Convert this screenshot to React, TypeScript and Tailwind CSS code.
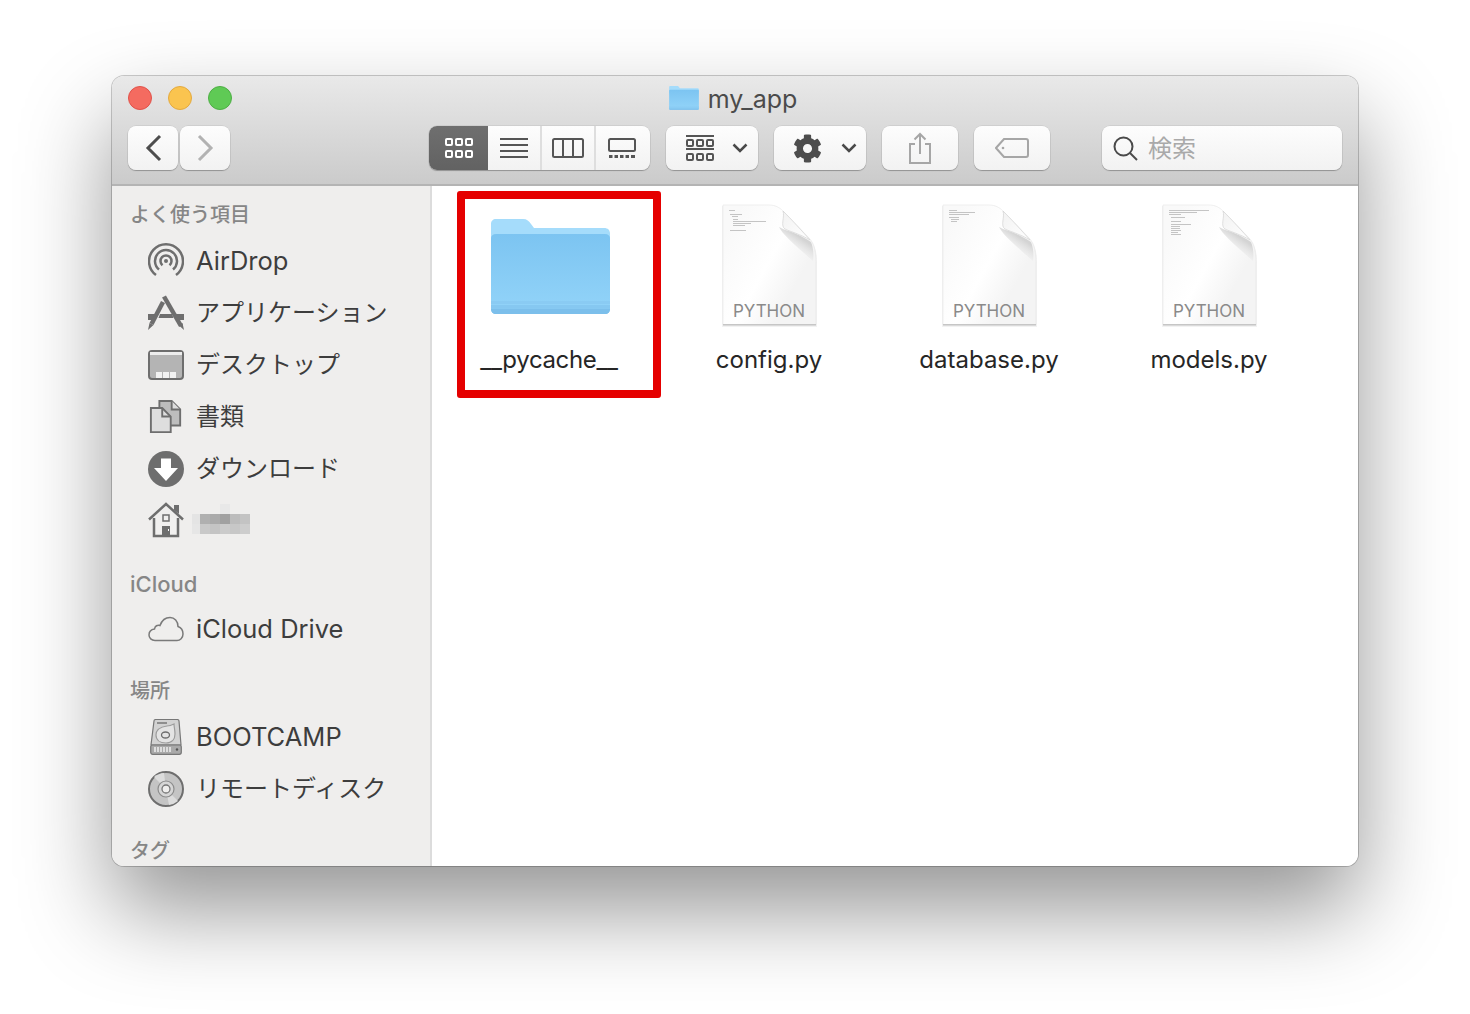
import React from "react";
import { FaCog } from "react-icons/fa";

const btnFace = "bg-gradient-to-b from-[#fdfdfd] to-[#f2f2f2] shadow-[0_0_0_0.5px_rgba(0,0,0,0.1),0_1px_1px_rgba(0,0,0,0.25)]";

const Folder = ({ className }: { className: string }) => (
  <svg viewBox="0 0 119 96" className={className}>
    <defs>
      <linearGradient id="folderFront" x1="0" y1="0" x2="0" y2="1">
        <stop offset="0" stopColor="#7cc4f1" />
        <stop offset="1" stopColor="#93d4f9" />
      </linearGradient>
    </defs>
    <path d="M0 5C0 2 2 0 5 0H32C36 0 38 2 40 5L43 9H113C117 9 119 11 119 15V30H0Z" fill="#a5dcfb" />
    <path d="M0 19C0 17 2 15 5 15H114C117 15 119 17 119 19V90C119 93 117 95 114 95H5C2 95 0 93 0 90Z" fill="url(#folderFront)" />
    <rect x="0" y="82" width="119" height="3" fill="#8acbf3" />
    <rect x="0" y="86" width="119" height="3" fill="#86c8f1" />
    <path d="M0 89.5H119V90C119 93 117 95 114 95H5C2 95 0 93 0 90Z" fill="#7cbfeb" />
  </svg>
);

const Chevron = ({ d, color }: { d: string; color: string }) => (
  <svg viewBox="0 0 50 44" className="w-[50px] h-[44px]">
    <path d={d} fill="none" stroke={color} strokeWidth="3" />
  </svg>
);

const IconGrid = ({ color }: { color: string }) => (
  <svg viewBox="0 0 28 20" className="ml-[1px] w-[28px] h-[20px]" fill="none" stroke={color} strokeWidth="2">
    {[1, 11, 21].map((x) =>
      [1, 13].map((y) => <rect key={`${x}-${y}`} x={x} y={y} width="6" height="6" rx="1" />)
    )}
  </svg>
);

const Segments = () => (
  <div className={`flex h-[44px] w-[221px] rounded-[8px] ${btnFace}`}>
    <div className="flex h-full w-[59px] items-center justify-center rounded-l-[8px] bg-gradient-to-b from-[#6f6f6f] to-[#626262]">
      <IconGrid color="#ffffff" />
    </div>
    <div className="flex h-full w-[54px] items-center justify-center border-r-2 border-[#dedede]">
      <svg viewBox="0 0 28 20" className="w-[28px] h-[20px]" fill="#555555">
        <rect y="0" width="28" height="2" />
        <rect y="6" width="28" height="2" />
        <rect y="12" width="28" height="2" />
        <rect y="18" width="28" height="2" />
      </svg>
    </div>
    <div className="flex h-full w-[54px] items-center justify-center border-r-2 border-[#dedede]">
      <svg viewBox="0 0 32 20" className="w-[32px] h-[20px]" fill="none" stroke="#555555" strokeWidth="2">
        <rect x="1" y="1" width="30" height="18" rx="1.5" />
        <path d="M11 1V19M21 1V19" />
      </svg>
    </div>
    <div className="flex h-full flex-1 items-center justify-center pr-[2px]">
      <svg viewBox="0 0 28 20" className="w-[28px] h-[20px]">
        <rect x="1" y="1" width="26" height="12" rx="1.5" fill="none" stroke="#555555" strokeWidth="2" />
        <path d="M1 17h3.5v3H1zM6.500 17H10v3H6.500zM12 17h3.500v3H12zM17.500 17H21v3h-3.500zM23 17h4v3h-4z" fill="#555555" />
      </svg>
    </div>
  </div>
);

const Btn = ({ w, children }: { w: string; children: React.ReactNode }) => (
  <div className={`flex h-[44px] items-center justify-center rounded-[8px] ${btnFace} ${w}`}>
    {children}
  </div>
);

const Caret = () => (
  <svg viewBox="0 0 16 10" className="w-[16px] h-[10px]">
    <path d="M1.500 1.500L8 8L14.500 1.500" fill="none" stroke="#4a4a4a" strokeWidth="2.500" />
  </svg>
);

const Toolbar = () => (
  <div className="mt-[16px] flex pl-[16px]">
    <div className="flex gap-[2px]">
      <Btn w="w-[50px]">
        <Chevron d="M32 10L20 22L32 34" color="#4d4d4d" />
      </Btn>
      <Btn w="w-[50px]">
        <Chevron d="M19 10L31 22L19 34" color="#b2b2b2" />
      </Btn>
    </div>
    <div className="ml-[199px]">
      <Segments />
    </div>
    <div className="ml-[16px]">
      <Btn w="w-[92px] gap-[18px] pl-[10px]">
        <svg viewBox="0 0 28 26" className="w-[28px] h-[26px]" fill="none" stroke="#555555" strokeWidth="2">
          <path d="M0 1H28M0 14H28" />
          <rect x="1" y="5" width="6" height="6" rx="1" />
          <rect x="11" y="5" width="6" height="6" rx="1" />
          <rect x="21" y="5" width="6" height="6" rx="1" />
          <rect x="1" y="19" width="6" height="6" rx="1" />
          <rect x="11" y="19" width="6" height="6" rx="1" />
          <rect x="21" y="19" width="6" height="6" rx="1" />
        </svg>
        <Caret />
      </Btn>
    </div>
    <div className="ml-[16px]">
      <Btn w="w-[92px] gap-[19px] pl-[9px]">
        <FaCog className="h-[29px] w-[29px] text-[#4d4d4d]" />
        <Caret />
      </Btn>
    </div>
    <div className="ml-[16px]">
      <Btn w="w-[76px]">
        <svg viewBox="0 0 24 32" className="w-[24px] h-[32px]" fill="none" stroke="#a6a6a6" strokeWidth="2">
          <path d="M7 12H2V31H22V12H17" />
          <path d="M12 22V2M6.500 7.500L12 2L17.500 7.500" />
        </svg>
      </Btn>
    </div>
    <div className="ml-[16px]">
      <Btn w="w-[76px]">
        <svg viewBox="0 0 34 20" className="w-[34px] h-[20px]" fill="none" stroke="#a6a6a6" strokeWidth="2">
          <path d="M9 1H31C32 1 33 2 33 3V17C33 18 32 19 31 19H9L1 10Z" />
          <circle cx="8" cy="10" r="1.300" fill="#a6a6a6" stroke="none" />
        </svg>
      </Btn>
    </div>
    <div className={`ml-[52px] flex h-[44px] w-[240px] items-center rounded-[8px] pl-[11px] ${btnFace}`}>
      <svg viewBox="0 0 25 25" className="w-[25px] h-[25px]" fill="none" stroke="#4a4a4a" strokeWidth="2">
        <circle cx="10.500" cy="10.500" r="9" />
        <path d="M17 17L24 24" />
      </svg>
      <span className="ml-[10px] mt-[2px] text-[24px] leading-[30px] text-[#a9a9a9]">検索</span>
    </div>
  </div>
);

const AirDropIcon = () => (
  <svg viewBox="0 0 36 36" className="h-[36px] w-[36px]" fill="none" stroke="#6e6e6e" strokeWidth="2.500">
    <path d="M8 32A17 17 0 1 1 28 32" />
    <path d="M11 26.500A11 11 0 1 1 25 26.500" />
    <path d="M14.500 22.200A5.500 5.500 0 1 1 21.500 22.200" />
    <circle cx="18" cy="18" r="2" fill="#6e6e6e" stroke="none" />
  </svg>
);

const AppsIcon = () => (
  <svg viewBox="0 0 36 36" className="h-[36px] w-[36px]">
    <path d="M0 19H10L7 25H0ZM26 19H36V25H29ZM12 19H24L25.500 23H10.500Z" fill="#6e6e6e" />
    <path d="M16 1.500L33 31" fill="none" stroke="#6e6e6e" strokeWidth="4.500" />
    <path d="M15 7L3.500 29" fill="none" stroke="#6e6e6e" strokeWidth="4.500" />
    <path d="M0 35L1.500 28L5.500 30ZM36 35L34.500 28L30.500 30Z" fill="#6e6e6e" />
  </svg>
);

const DesktopIcon = () => (
  <svg viewBox="0 0 36 30" className="h-[30px] w-[36px]">
    <rect x="1" y="1" width="34" height="28" rx="3" fill="#b4b4b4" stroke="#6e6e6e" strokeWidth="2" />
    <rect x="2" y="2" width="32" height="3" fill="#ededed" />
    <path d="M8 22h6v6H8zM15 22h6v6h-6zM22 22h6v6h-6z" fill="#f2f2f2" />
  </svg>
);

const DocsIcon = () => (
  <svg viewBox="0 0 36 36" className="h-[36px] w-[34px]" strokeWidth="2" stroke="#6e6e6e">
    <path d="M11 1H24L33 10V27H11Z" fill="#bdbdbd" />
    <path d="M24 1V10H33" fill="#dddddd" />
    <path d="M2 8.500H14L23 17.500V34H2Z" fill="#dedede" />
    <path d="M14 8.500V17.500H23" fill="none" />
  </svg>
);

const DownloadIcon = () => (
  <svg viewBox="0 0 36 36" className="h-[36px] w-[36px]">
    <circle cx="18" cy="18" r="18" fill="#6e6e6e" />
    <path d="M13 7.500H23V17H30L18 30L6 17H13Z" fill="#ffffff" />
  </svg>
);

const HomeIcon = () => (
  <svg viewBox="0 0 36 36" className="-mt-[3px] h-[36px] w-[36px]">
    <path d="M6 16V34H30V16" fill="#f1f0ef" stroke="#6e6e6e" strokeWidth="2.500" />
    <path d="M1 17.500L18 2L35 17.500" fill="none" stroke="#6e6e6e" strokeWidth="2.500" />
    <path d="M26 3H31V12L26 8Z" fill="#6e6e6e" />
    <rect x="15" y="13" width="6" height="6" fill="none" stroke="#6e6e6e" strokeWidth="1.500" />
    <rect x="14" y="24" width="8" height="10" fill="#6e6e6e" />
    <rect x="20" y="27" width="1" height="2" fill="#ffffff" />
  </svg>
);

const CloudIcon = () => (
  <svg viewBox="0 0 36 26" className="h-[26px] w-[36px]">
    <path d="M7 24.500C3.500 24.500 1 22 1 19C1 16 3 13.500 6.500 13C7 10 9.500 8.500 12 9.500C14 4 18 1.500 22 1.500C26.500 1.500 30 5 30 10.500C33 11.500 35 14.500 35 18C35 22 32 24.500 29 24.500Z" fill="#efeeed" stroke="#7a7a7a" strokeWidth="1.500" />
  </svg>
);

const DiskIcon = () => (
  <svg viewBox="0 0 32 36" className="h-[36px] w-[32px]">
    <path d="M4 2C4 1 5 0.500 6 0.500H27C28 0.500 29 1 29 2L31 26H1Z" fill="#d2d2d2" stroke="#777777" strokeWidth="1.200" />
    <rect x="0.700" y="26" width="30.600" height="9.300" rx="2" fill="#a9a9a9" stroke="#777777" strokeWidth="1.200" />
    <path d="M7 4H17" stroke="#777777" strokeWidth="1.500" />
    <path d="M17 7C10 8 6 11 6 16C6 21 10 24 16 24C22 24 25 20 25 15C25 11 24 8 24 5C22 6 19 7 17 7Z" fill="#e4e4e4" stroke="#9c9c9c" strokeWidth="1.200" />
    <ellipse cx="15.500" cy="16" rx="4" ry="3" fill="#e4e4e4" stroke="#6e6e6e" strokeWidth="1.300" />
    <path d="M5 28V33M8 28V33M11 28V33M14 28V33M17 28V33M20 28V33" stroke="#eeeeee" strokeWidth="1.500" />
    <circle cx="27" cy="30.500" r="1.200" fill="#555555" />
  </svg>
);

const CdIcon = () => (
  <svg viewBox="0 0 36 36" className="h-[36px] w-[36px]">
    <circle cx="18" cy="18" r="17" fill="#c4c4c4" stroke="#6e6e6e" strokeWidth="2" />
    <path d="M18 18L6 6A17 17 0 0 1 16 2Z" fill="#dcdcdc" />
    <path d="M18 18L30 30A17 17 0 0 1 21 34Z" fill="#dcdcdc" />
    <circle cx="18" cy="18" r="8" fill="#d6d6d6" stroke="#8c8c8c" strokeWidth="1.200" />
    <circle cx="18" cy="18" r="4" fill="#efeeed" stroke="#777777" strokeWidth="1.300" />
  </svg>
);

const MosaicName = () => {
  const cells: [number, number, number, string][] = [
    [220, 504, 10, "#e8e8e8"],
    [192, 514, 8, "#e4e4e4"],
    [200, 514, 10, "#b0b0b0"],
    [210, 514, 10, "#aaaaaa"],
    [220, 514, 10, "#a1a1a1"],
    [230, 514, 10, "#bcbcbc"],
    [240, 514, 10, "#c3c3c3"],
    [192, 524, 8, "#e6e6e6"],
    [200, 524, 10, "#c9c9c9"],
    [210, 524, 10, "#c4c4c4"],
    [220, 524, 10, "#cbcbcb"],
    [230, 524, 10, "#c7c7c7"],
    [240, 524, 10, "#cdcdcd"],
  ];
  return (
    <svg viewBox="192 504 58 30" className="-ml-[4px] -mt-[4px] h-[30px] w-[58px]">
      {cells.map(([x, y, w, c]) => (
        <rect key={`${x}-${y}`} x={x} y={y} width={w} height="10" fill={c} />
      ))}
    </svg>
  );
};

const Heading = ({ children, cls = "pt-[2px] text-[20px]" }: { children: React.ReactNode; cls?: string }) => (
  <div className={`flex h-[40px] items-center pl-[18px] font-medium text-[#868686] ${cls}`}>{children}</div>
);

const Row = ({ icon, children, cls = "text-[24px]" }: { icon: React.ReactNode; children: React.ReactNode; cls?: string }) => (
  <div className="flex h-[52px] items-center pl-[36px]">
    <div className="flex w-[48px] items-center justify-start">
      <div className="flex w-[36px] justify-center">{icon}</div>
    </div>
    <div className={`text-[#3d3d3d] ${cls}`}>{children}</div>
  </div>
);

const Sidebar = () => (
  <div className="h-full w-[320px] shrink-0 overflow-hidden border-r-2 border-[#dcdcdc] bg-[#efeeed] pt-[8px]">
    <Heading>よく使う項目</Heading>
    <div className="mt-[1px]">
      <Row icon={<AirDropIcon />} cls="text-[25.5px]">AirDrop</Row>
      <Row icon={<AppsIcon />}>アプリケーション</Row>
      <Row icon={<DesktopIcon />}>デスクトップ</Row>
      <Row icon={<DocsIcon />}>書類</Row>
      <Row icon={<DownloadIcon />}>ダウンロード</Row>
      <Row icon={<HomeIcon />}><MosaicName /></Row>
    </div>
    <div className="mt-[17px]">
      <Heading cls="text-[22px]">iCloud</Heading>
    </div>
    <div className="-mt-[1px]">
      <Row icon={<CloudIcon />} cls="text-[25.5px]">iCloud Drive</Row>
    </div>
    <div className="mt-[15px]">
      <Heading>場所</Heading>
    </div>
    <div className="mt-[1px]">
      <Row icon={<DiskIcon />} cls="text-[25.5px]">BOOTCAMP</Row>
      <Row icon={<CdIcon />}>リモートディスク</Row>
    </div>
    <div className="mt-[15px]">
      <Heading>タグ</Heading>
    </div>
  </div>
);

const thumbs: Record<string, [number, number, number][]> = {
  config: [
    [6, 5, 6], [7, 9, 12], [9, 11, 6], [10, 14, 5], [10, 16, 33], [10, 18, 18], [10, 20, 12], [7, 25, 16],
  ],
  database: [
    [6, 5, 8], [6, 7, 26], [6, 9, 20], [6, 12, 10], [8, 14, 8], [8, 16, 6],
  ],
  models: [
    [6, 5, 40], [6, 7, 28], [6, 9, 12], [8, 12, 14], [8, 16, 10], [8, 19, 20], [8, 21, 9], [8, 23, 9], [8, 25, 10], [8, 27, 7], [8, 29, 10],
  ],
};

const PyFile = ({ thumb }: { thumb: string }) => (
  <div className="relative h-[120px] w-[93px]">
    <svg viewBox="-3 -1 99 125" className="absolute -left-[3px] -top-[1px] h-[125px] w-[99px]">
      <defs>
        <linearGradient id="pageFill" x1="0.2" y1="0" x2="0.9" y2="0.5">
          <stop offset="0" stopColor="#f9f9f9" />
          <stop offset="0.6" stopColor="#ffffff" />
          <stop offset="1" stopColor="#f4f4f4" />
        </linearGradient>
        <linearGradient id="foldFill" x1="0" y1="0" x2="1" y2="1">
          <stop offset="0" stopColor="#f2f2f2" />
          <stop offset="1" stopColor="#ffffff" />
        </linearGradient>
        <linearGradient id="foldShade" x1="0.6" y1="0.3" x2="0.2" y2="0.9">
          <stop offset="0" stopColor="#d4d4d4" />
          <stop offset="1" stopColor="#ffffff" stopOpacity="0" />
        </linearGradient>
      </defs>
      <path d="M-1 1H48C54 1 57 4 60 7L89 37C92 41 94 47 94 57V122H-1Z" fill="#000000" opacity="0.05" />
      <path d="M0 0H46C53 0 57 3 60 6L87 34C91 39 93 46 93 58V120H0Z" fill="url(#pageFill)" stroke="#e6e6e6" strokeWidth="0.600" />
      <path d="M0 119H93V120.500H0Z" fill="#c6c6c6" />
      <path d="M56 22C60 30 72 40 90 56C91 48 90 42 88 37C78 30 68 27 60 24Z" fill="url(#foldShade)" />
      <path d="M60 6C62 12 57 21 62 24C68 27 77 29 87 35C81 28 68 14 60 6Z" fill="url(#foldFill)" stroke="#d2d2d2" strokeWidth="0.700" />
      {thumbs[thumb].map(([x, y, w]) => (
        <rect key={`${x}-${y}`} x={x} y={y} width={w} height="0.600" fill="#a0a0a0" />
      ))}
    </svg>
    <div className="absolute bottom-[3px] left-0 right-0 text-center text-[17px] leading-[22px] text-[#8a8a8a]">PYTHON</div>
  </div>
);

const Item = ({ icon, label, cls = "" }: { icon: React.ReactNode; label: string; cls?: string }) => (
  <div className="flex w-[220px] flex-col items-center">
    <div className="flex h-[120px] items-center">{icon}</div>
    <div className={`mt-[17px] text-[24px] leading-[36px] text-[#262626] ${cls}`}>{label}</div>
  </div>
);

const Main = () => (
  <div className="relative flex-1 bg-white pl-[7px] pt-[19px]">
    <div className="flex">
      <Item icon={<Folder className="ml-[2px] mt-[3px] h-[96px] w-[119px]" />} label="__pycache__" cls="tracking-[-0.35px]" />
      <Item icon={<PyFile thumb="config" />} label="config.py" />
      <Item icon={<PyFile thumb="database" />} label="database.py" />
      <Item icon={<PyFile thumb="models" />} label="models.py" />
    </div>
    <div className="absolute left-[25px] top-[5px] h-[207px] w-[204px] rounded-[3px] border-[8px] border-[#e50000]" />
  </div>
);

export default function App() {
  return (
    <div className="h-[1014px] w-[1470px] overflow-hidden bg-white pl-[112px] pt-[76px] font-['Inter','Noto_Sans_CJK_JP',sans-serif]">
      <div className="flex h-[790px] w-[1246px] flex-col overflow-hidden rounded-[12px] shadow-[0_0_0_1px_rgba(0,0,0,0.2),0_44px_90px_rgba(0,0,0,0.42)]">
        <div className="h-[110px] shrink-0 border-b-2 border-[#b4b4b4] bg-gradient-to-b from-[#e9e9e9] to-[#cbcbcb]">
          <div className="grid grid-cols-[1fr_auto_1fr] pt-[10px] pl-[16px]">
            <div className="flex gap-[16px]">
              <div className="h-[24px] w-[24px] rounded-full border border-[#e0524a] bg-[#f46b60]" />
              <div className="h-[24px] w-[24px] rounded-full border border-[#e3a93f] bg-[#fac44f]" />
              <div className="h-[24px] w-[24px] rounded-full border border-[#4eae45] bg-[#5fca55]" />
            </div>
            <div className="flex h-[24px] items-center gap-[9px] pr-[20px]">
              <Folder className="h-[24px] w-[30px]" />
              <span className="mt-[2px] text-[25px] leading-[24px] text-[#4b4b4b]">my_app</span>
            </div>
            <div />
          </div>
          <Toolbar />
        </div>
        <div className="flex min-h-0 flex-1">
          <Sidebar />
          <Main />
        </div>
      </div>
    </div>
  );
}
